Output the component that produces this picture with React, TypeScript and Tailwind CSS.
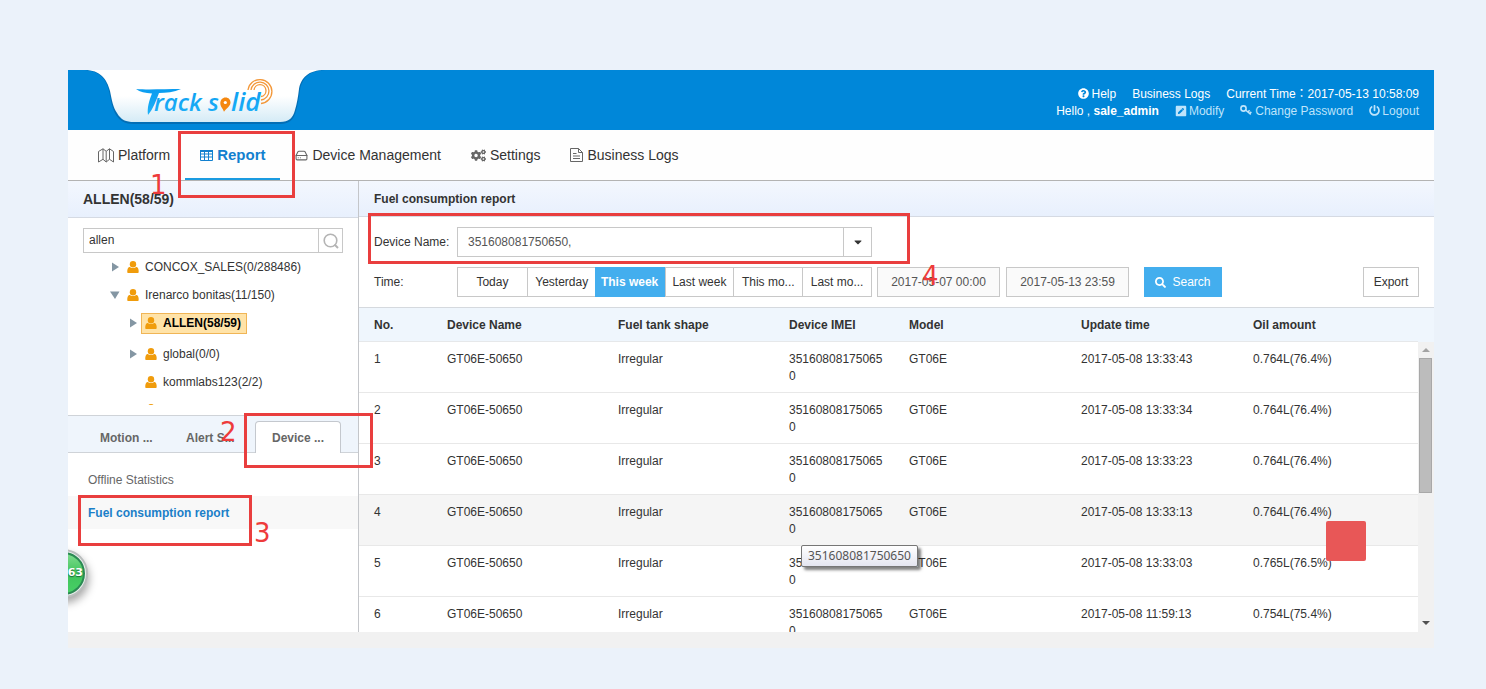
import React from 'react';
import { HardDrive } from 'lucide-react';
import {
  FaCaretDown, FaCogs, FaPenSquare, FaPowerOff, FaQuestionCircle, FaSearch,
} from 'react-icons/fa';

interface TreeNode {
  name: string;
  state: 'open' | 'closed' | 'leaf';
  indent: string;
  selected?: boolean;
}

interface ReportRow {
  no: number;
  updated: string;
  oil: string;
  hovered?: boolean;
}

const TREE: TreeNode[] = [
  { name: 'CONCOX_SALES(0/288486)', state: 'closed', indent: 'pl-10' },
  { name: 'Irenarco bonitas(11/150)', state: 'open', indent: 'pl-10' },
  { name: 'ALLEN(58/59)', state: 'closed', indent: 'pl-14', selected: true },
  { name: 'global(0/0)', state: 'closed', indent: 'pl-14' },
  { name: 'kommlabs123(2/2)', state: 'leaf', indent: 'pl-14' },
  { name: '', state: 'leaf', indent: 'pl-14' },
];

const RANGES = ['Today', 'Yesterday', 'This week', 'Last week', 'This mo...', 'Last mo...'];

const ROWS: ReportRow[] = [
  { no: 1, updated: '2017-05-08 13:33:43', oil: '0.764L(76.4%)' },
  { no: 2, updated: '2017-05-08 13:33:34', oil: '0.764L(76.4%)' },
  { no: 3, updated: '2017-05-08 13:33:23', oil: '0.764L(76.4%)' },
  { no: 4, updated: '2017-05-08 13:33:13', oil: '0.764L(76.4%)', hovered: true },
  { no: 5, updated: '2017-05-08 13:33:03', oil: '0.765L(76.5%)' },
  { no: 6, updated: '2017-05-08 11:59:13', oil: '0.754L(75.4%)' },
];

const MapIcon = () => (
  <svg width="16" height="15" viewBox="0 0 16 15" fill="none" stroke="#666">
    <path d="M.5 3.500 5 .8l3.200 2.500L11.500.8l4 2.700v10.500l-4-2.700-3.300 2.700L5 11.300.5 14z M5 .8v10.500 M8.200 3.300V14 M11.500.8v10.500" />
  </svg>
);

const GridIcon = () => (
  <svg width="13" height="11" viewBox="0 0 13 11" fill="none" stroke="currentColor">
    <path d="M.5 1h12v9.500h-12z M.5 4h12 M.5 7h12 M4.500 1v9.500 M8.500 1v9.500" />
    <path d="M0 1h13" strokeWidth="2" />
  </svg>
);

const DocIcon = () => (
  <svg width="13" height="14" viewBox="0 0 13 14" fill="none" stroke="#666">
    <path d="M.5.5h8l4 4v9H.5z M8.500.5v4h4 M3 5.500h3.500 M3 8h7 M3 10.500h7" />
  </svg>
);

const KeyIcon = () => (
  <svg width="12" height="11" viewBox="0 0 12 11" fill="none" stroke="currentColor" strokeWidth="1.600">
    <circle cx="3.500" cy="3.500" r="2.600" />
    <path d="M5.500 5 10.800 9.300 M8 7 9.600 5.300 M9.800 8.500 11.300 6.900" />
  </svg>
);

const PersonIcon = () => (
  <svg width="12" height="12" viewBox="0 0 12 12" fill="#f09c0c" className="shrink-0">
    <circle cx="6" cy="3.200" r="3.200" />
    <path d="M.8 12C0 12 0 7 2.200 6.100c.6-.2 1 .1 1.500.4 1.300.8 3.200.8 4.500 0 .5-.3 1-.6 1.600-.4C12 7 12 12 11.200 12z" />
  </svg>
);

const Expander = ({ state }: { state: TreeNode['state'] }) => (
  <svg width="10" height="10" viewBox="0 0 10 10" fill="#8496a3" className="shrink-0">
    {state === 'closed' && <path d="M2 .5 9 5 2 9.500z" />}
    {state === 'open' && <path d="M0 1.500h9.500L5 9z" />}
  </svg>
);

const Logo = () => (
  <svg width="272" height="60" viewBox="0 0 272 60" role="img" aria-label="Tracksolid" className="shrink-0">
    <defs>
      <linearGradient id="plate" x1="0" y1="0" x2="0" y2="1">
        <stop offset="0.500" stopColor="#fff" />
        <stop offset="1" stopColor="#d5ebf6" />
      </linearGradient>
      <linearGradient id="word" x1="0" y1="0" x2="0" y2="1">
        <stop offset="0" stopColor="#0a9cf0" />
        <stop offset="1" stopColor="#1fb2f8" />
      </linearGradient>
    </defs>
    <path
      d="M17 0C32 1 38 9 41 21C43 31 44 38 48 45C52 51 57 54 66 54H212C222 54 226 49 228 41C230 34 231 28 232 20C234 9 240 1 257 0Z"
      fill="#0464a5"
      opacity="0.700"
    />
    <path
      d="M17 0C32 0 39 9 42 21C44 31 45 37 49 43C53 50 58 52 66 52H212C221 52 225 48 227 40C229 33 230 27 231 19C233 8 240 0 257 0Z"
      fill="url(#plate)"
    />
    <g fill="url(#word)" fontFamily="'Open Sans', sans-serif" fontStyle="italic" fontWeight="600" fontSize="24">
      <path d="M68 19C80 20 97 19 113 19C106 22 98 23 91 23C88 31 85 39 80 45C79 38 81 31 84 23.500C77 23 72 22 68 19Z" />
      <text x="86" y="41">rack</text>
      <text x="140" y="41">s</text>
      <text x="163" y="41" fontSize="26">lid</text>
    </g>
    <path d="M157.500 27.500c3.200 0 5 2.200 5 5 0 3.800-4 5.500-6.500 9.300-.9-3-4-5.300-3.700-9 .2-3 2.300-5.300 5.200-5.300z" fill="#f5870f" />
    <circle cx="157.300" cy="32.500" r="1.600" fill="#fff" />
    <g fill="none" stroke="#f3983a" strokeWidth="1.300">
      <path d="M180 20a12 12 0 1 1 13 13.500" />
      <path d="M183 20a9 9 0 1 1 10 10" />
      <path d="M186 20a6 6 0 1 1 7 6.500" />
    </g>
  </svg>
);

const NavItem = ({ icon, label, active }: { icon: React.ReactNode; label: string; active?: boolean }) => (
  <a
    href="#"
    className={`flex h-[50px] items-center gap-1 whitespace-nowrap px-[15px] ${
      active ? 'border-b-2 border-[#1a9be0] pt-0.5 text-[15px] font-bold text-[#1280cf]' : 'text-sm text-[#333]'
    }`}
  >
    {icon}
    {label}
  </a>
);

const Header = () => (
  <header className="flex h-[60px] justify-between bg-[#0087d9] text-xs text-white">
    <Logo />
    <div className="flex flex-col items-end justify-center gap-px pt-1 pr-[15px] leading-4">
      <div className="flex gap-4">
        <a href="#" className="flex items-center gap-0.5"><FaQuestionCircle size={11} />Help</a>
        <a href="#">Business Logs</a>
        <span>Current Time：2017-05-13 10:58:09</span>
      </div>
      <div className="flex gap-4">
        <span>Hello , <b>sale_admin</b></span>
        <a href="#" className="flex items-center gap-0.5 text-[#bfe4fb]"><FaPenSquare size={12} />Modify</a>
        <a href="#" className="flex items-center gap-[3px] text-[#bfe4fb]"><KeyIcon />Change Password</a>
        <a href="#" className="flex items-center gap-0.5 text-[#bfe4fb]"><FaPowerOff size={11} />Logout</a>
      </div>
    </div>
  </header>
);

const Sidebar = () => (
  <aside className="w-[291px] shrink-0 border-r border-[#c4c6ca]">
    <h2 className="flex h-[37px] items-center border-b border-[#d5dae3] bg-linear-to-b from-[#f3f7fe] to-[#e8f0fd] px-[15px] text-sm font-bold">
      ALLEN(58/59)
    </h2>
    <div className="px-[15px] pt-2.5">
      <div className="flex h-[25px] border border-[#c8c8c8]">
        <input aria-label="Search account" defaultValue="allen" className="min-w-0 flex-1 px-[5px] pb-0.5 outline-none" />
        <button aria-label="Find" className="flex w-6 items-center justify-center border-l border-[#c8c8c8] text-[#b4b4b4]">
          <svg width="16" height="16" viewBox="0 0 16 16" fill="none" stroke="currentColor" strokeWidth="1.600">
            <circle cx="7.500" cy="7.500" r="6.300" />
            <path d="M11.500 11.500 15 15" strokeWidth="2" />
          </svg>
        </button>
      </div>
    </div>
    <ul className="h-[152px] overflow-hidden">
      {TREE.map((node, i) => (
        <li
          key={i}
          className={`flex h-7 items-center gap-[3px] ${node.indent} ${node.selected ? 'mb-[3px]' : ''}`}
        >
          <span className={node.indent === 'pl-14' ? 'ml-1' : 'ml-0.5'}><Expander state={node.state} /></span>
          <span
            className={`flex h-[21px] items-center gap-1.5 border px-[3px] ${
              node.selected ? 'border-[#f0b556] bg-[#ffe3a8] pr-[5px] font-bold text-black' : 'border-transparent'
            }`}
          >
            <PersonIcon />
            {node.name}
          </span>
        </li>
      ))}
    </ul>
    <div role="tablist" className="mt-2.5 flex h-[38px] items-end border-y border-[#cfd3d8] bg-[#eff5fc] pl-[15px] font-bold text-[#666]">
      <button role="tab" className="h-7 w-[86px] pl-[17px] text-left">Motion ...</button>
      <button role="tab" className="h-7 w-[86px] pl-[17px] text-left">Alert S...</button>
      <button role="tab" aria-selected="true" className="-mb-px h-8 w-[86px] rounded-t border border-b-0 border-[#c4c8ce] bg-white pl-4 text-left">
        Device ...
      </button>
    </div>
    <nav className="flex flex-col pt-2.5">
      <a href="#" className="flex h-[33px] items-center px-5 text-[#666]">Offline Statistics</a>
      <a href="#" className="flex h-[33px] items-center bg-[#f8f8f8] px-5 font-bold text-[#1b7fc8]">Fuel consumption report</a>
    </nav>
  </aside>
);

const SearchForm = () => (
  <form className="flex flex-col gap-2.5 border-b border-[#d5d9de] px-[15px] py-2.5">
    <div className="flex items-center">
      <label htmlFor="device" className="w-[83px]">Device Name:</label>
      <div className="flex h-[30px] w-[415px] border border-[#c8c8c8]">
        <input id="device" defaultValue="351608081750650," className="min-w-0 flex-1 px-2.5 text-[#555] outline-none" />
        <button type="button" aria-label="Choose device" className="flex w-7 items-center justify-center border-l border-[#c8c8c8]">
          <FaCaretDown size={12} />
        </button>
      </div>
    </div>
    <div className="flex items-center">
      <span className="w-[83px]">Time:</span>
      <div className="grid h-[30px] w-[415px] grid-cols-6 border border-[#c8c8c8]">
        {RANGES.map((range) => (
          <button
            type="button"
            key={range}
            className={
              range === 'This week'
                ? '-my-px -ml-px bg-[#43aeee] font-bold text-white'
                : 'border-l border-[#c8c8c8] first:border-l-0'
            }
          >
            {range}
          </button>
        ))}
      </div>
      <input aria-label="From" defaultValue="2017-05-07 00:00" className="ml-[5px] h-[30px] w-[123px] border border-[#c8c8c8] bg-[#fafafa] text-center text-[#555]" />
      <input aria-label="To" defaultValue="2017-05-13 23:59" className="ml-1.5 h-[30px] w-[123px] border border-[#c8c8c8] bg-[#fafafa] text-center text-[#555]" />
      <button type="button" className="ml-[15px] flex h-[30px] w-[78px] items-center justify-center gap-1.5 bg-[#43aeee] text-white">
        <FaSearch size={11} />
        Search
      </button>
      <button type="button" className="ml-auto h-[30px] w-14 border border-[#c8c8c8]">Export</button>
    </div>
  </form>
);

const ReportTable = () => (
  <div className="flex h-[324px] overflow-hidden bg-[#eff6fd]">
    <div className="min-w-0 flex-1">
      <table className="w-full table-fixed border-separate border-spacing-0 text-left">
        <colgroup>
          <col className="w-[73px]" />
          <col className="w-[171px]" />
          <col className="w-[171px]" />
          <col className="w-[120px]" />
          <col className="w-[172px]" />
          <col className="w-[172px]" />
          <col className="w-[180px]" />
        </colgroup>
        <thead>
          <tr className="h-[34px]">
            {['No.', 'Device Name', 'Fuel tank shape', 'Device IMEI', 'Model', 'Update time', 'Oil amount'].map((head) => (
              <th key={head} className="border-b border-[#e6e8ea] pl-[15px] font-bold">{head}</th>
            ))}
          </tr>
        </thead>
        <tbody className="align-top leading-[17px] [&_td]:border-b [&_td]:border-[#e8e8e8] [&_td]:pt-[9px] [&_td]:pr-2.5 [&_td]:pb-[7px] [&_td]:pl-[15px]">
          {ROWS.map((row) => (
            <tr key={row.no} className={row.hovered ? 'bg-[#f5f5f5]' : 'bg-white'}>
              <td>{row.no}</td>
              <td>GT06E-50650</td>
              <td>Irregular</td>
              <td className="break-all">351608081750650</td>
              <td>GT06E</td>
              <td>{row.updated}</td>
              <td>{row.oil}</td>
            </tr>
          ))}
        </tbody>
      </table>
    </div>
    <div className="flex w-4 shrink-0 flex-col pt-[34px]">
      <div className="flex flex-1 flex-col items-center bg-[#f1f1f1] pr-px">
        <svg width="8" height="16" viewBox="0 0 8 16" fill="#a3a3a3"><path d="M0 10h8L4 6z" /></svg>
        <div className="h-[135px] w-[13px] border border-[#a8a8a8] bg-[#bcbcbc]" />
        <svg width="8" height="16" viewBox="0 0 8 16" fill="#505050" className="mt-auto"><path d="M0 5h8L4 9z" /></svg>
      </div>
    </div>
  </div>
);

/* Numbered marks of the walkthrough, drawn over the screen */
const Marks = () => (
  <div className="pointer-events-none absolute inset-0 text-[26px] leading-8 text-[#ee3b3b] [font-family:'DejaVu_Sans',sans-serif]">
    <div className="absolute top-[61px] left-[110px] h-[67px] w-[117px] border-3 border-[#e93e3e]" />
    <div className="absolute top-[343px] left-[176px] h-[55px] w-[129px] border-3 border-[#e93e3e]" />
    <div className="absolute top-[425px] left-[10px] h-[51px] w-[174px] border-3 border-[#e93e3e]" />
    <div className="absolute top-[143px] left-[300px] h-[51px] w-[542px] border-3 border-[#e93e3e]" />
    <span className="absolute top-[99px] left-[82px]">1</span>
    <span className="absolute top-[346px] left-[152px]">2</span>
    <span className="absolute top-[447px] left-[186px]">3</span>
    <span className="absolute top-[190px] left-[854px]">4</span>
  </div>
);

const SpeedBall = () => (
  <div className="absolute top-[470px] left-0 h-20 w-10 overflow-hidden">
    <div className="absolute top-[9px] -left-[29px] flex h-[49px] w-[49px] items-center justify-end rounded-full border-2 border-[#b9bdbd] bg-[#e9efec] p-px shadow-[1px_5px_8px_rgba(0,0,0,0.35)]">
      <div className="flex size-full items-center justify-end rounded-full border-2 border-[#2b8a54] bg-linear-to-b from-[#7bdc8c] via-[#3fc35c] to-[#48d066] text-[11px] font-bold text-white [font-family:'DejaVu_Sans',sans-serif] [text-shadow:0_1px_1px_#1c6b35]">
        63
      </div>
    </div>
  </div>
);

export default function App() {
  return (
    <div className="min-h-screen bg-[#ebf2fa] pt-[70px] pr-[52px] pb-10 pl-[68px] text-xs text-[#333] [font-family:'Liberation_Sans',Arial,'Noto_Sans_CJK_TC',sans-serif]">
      <div className="relative">
        <Header />
        <nav className="flex h-[51px] border-b border-[#b3b3b3] bg-[#fefefe] pl-[15px]">
          <NavItem icon={<MapIcon />} label="Platform" />
          <NavItem icon={<GridIcon />} label="Report" active />
          <NavItem icon={<HardDrive size={13} strokeWidth={2} className="text-[#666]" />} label="Device Management" />
          <NavItem icon={<FaCogs size={15} className="text-[#666]" />} label="Settings" />
          <NavItem icon={<DocIcon />} label="Business Logs" />
        </nav>
        <div className="flex bg-white">
          <Sidebar />
          <main className="min-w-0 flex-1">
            <h1 className="flex h-9 items-center border-b border-[#d5dae3] bg-linear-to-b from-[#f3f7fe] to-[#e8f0fd] px-[15px] font-bold">
              Fuel consumption report
            </h1>
            <SearchForm />
            <ReportTable />
          </main>
        </div>
        <div className="h-4 bg-[#f1f1f1]" />

        <SpeedBall />
        <div role="tooltip" className="absolute top-[475px] left-[733px] rounded-xs border border-[#767676] bg-linear-to-b from-white to-[#e4e5f0] px-1.5 leading-5 text-[#555] shadow-[3px_3px_3px_rgba(0,0,0,0.5)] [font-family:'Noto_Sans',sans-serif]">
          351608081750650
        </div>
        <div className="absolute top-[451px] right-[68px] size-10 rounded-xs bg-[#e85757]" />
        <Marks />
      </div>
    </div>
  );
}
